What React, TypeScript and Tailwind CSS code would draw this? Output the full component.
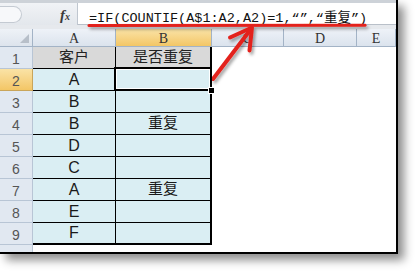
const sheet = [
  { n: 1, a: "客户", b: "是否重复" },
  { n: 2, a: "A", b: "" },
  { n: 3, a: "B", b: "" },
  { n: 4, a: "B", b: "重复" },
  { n: 5, a: "D", b: "" },
  { n: 6, a: "C", b: "" },
  { n: 7, a: "A", b: "重复" },
  { n: 8, a: "E", b: "" },
  { n: 9, a: "F", b: "" },
];

const cols = ["A", "B", "C", "D", "E"];

export default function App() {
  return (
    <div className="relative w-[419px] h-[275px] overflow-hidden bg-white font-['Liberation_Sans','Noto_Sans_CJK_SC',sans-serif]">
      <div className="w-[398px] h-[254px] flex flex-col border-r-2 border-b-2 border-black bg-white shadow-[6px_6px_9px_rgba(0,0,0,0.45)]">
        {/* formula bar */}
        <div className="h-[3px] bg-[#cdd2d8]" />
        <div className="h-[22px] flex">
          <div className="w-[78px] flex items-center bg-gradient-to-b from-[#f1f3f6] to-[#e3e7ec] border-r border-[#bfc6cf]">
            <div className="w-[22px] h-[17px] rounded-r-[9px] bg-[#f7f8fa] border border-l-0 border-[#c4cad2]" />
            <span className="ml-[38px] mt-[2px] font-['Liberation_Serif',serif] italic font-bold text-[15px] leading-none text-[#3a3a3a]">
              f<span className="text-[10px]">x</span>
            </span>
          </div>
          <div className="flex-1 bg-white border-b border-[#b9c0c9] pl-[11px] pt-[8px] font-['Liberation_Mono','Noto_Sans_CJK_SC',monospace] text-[13.5px] leading-[15px] text-[#111] whitespace-nowrap">
            =IF(COUNTIF(A$1:A2,A2)=1,“”,“重复”)
          </div>
        </div>
        <div className="h-[4px] bg-[#e6e9ed]" />

        {/* sheet */}
        <div className="flex-1 grid grid-cols-[33px_83px_96px_72px_73px_1fr] grid-rows-[18px_repeat(9,22px)_1fr]">
          <div className="relative bg-gradient-to-b from-[#eef2f7] to-[#dde4ed] border-r border-b border-[#a3b3c6]">
            <svg className="absolute right-[3px] bottom-[3px]" width="9" height="9" viewBox="0 0 9 9">
              <polygon points="9,0 9,9 0,9" fill="#b7bfc9" />
            </svg>
          </div>
          {cols.map((c) => (
            <div
              key={c}
              className={`flex items-center justify-center pt-[2px] border-r border-b border-[#a3b3c6] font-['Liberation_Serif',serif] text-[14px] leading-none text-[#333] ${
                c === "B"
                  ? "bg-gradient-to-b from-[#fae3a6] to-[#f3c665]"
                  : "bg-gradient-to-b from-[#eef2f8] to-[#dbe3ed]"
              }`}
            >
              {c}
            </div>
          ))}

          {sheet.map((r) => (
            <div key={r.n} className="contents">
              <div
                className={`flex items-center justify-center pt-[3px] border-r border-b text-[14px] leading-none text-[#555] ${
                  r.n === 2
                    ? "bg-gradient-to-b from-[#fae3a6] to-[#f3c665] border-[#c9a55a]"
                    : "bg-[#e1e8f1] border-[#b8c5d5]"
                }`}
              >
                {r.n}
              </div>
              <div
                className={`flex items-center justify-center border-r border-black ${
                  r.n === 9 ? "border-b-2" : "border-b"
                } ${
                  r.n === 1
                    ? "bg-[#d9d9d9] text-[15px] text-[#222]"
                    : "bg-[#daeef3] text-[16px] text-[#1a1a1a]"
                }`}
              >
                {r.a}
              </div>
              <div
                className={`relative flex items-center justify-center border-r-2 border-black text-[15px] text-[#1a1a1a] ${
                  r.n === 9 ? "border-b-2" : "border-b"
                } ${r.n === 1 ? "bg-[#d9d9d9] text-[#222]" : "bg-[#daeef3]"}`}
              >
                {r.b}
                {r.n === 2 && (
                  <>
                    <span className="absolute z-10 -top-[2px] -left-[2px] -right-[2px] -bottom-[1px] border-2 border-black shadow-[inset_0_0_0_1px_#fff]" />
                    <span className="absolute z-20 -right-[5px] -bottom-[4px] w-[7px] h-[7px] bg-black border border-white" />
                  </>
                )}
              </div>
              <div className="bg-white" />
              <div className="bg-white" />
              <div className="bg-white" />
            </div>
          ))}

          <div className="bg-[#e1e8f1] border-r border-[#b8c5d5]" />
          <div className="bg-white" />
          <div className="bg-white" />
          <div className="bg-white" />
          <div className="bg-white" />
          <div className="bg-white" />
        </div>
      </div>

      {/* red annotation */}
      <svg className="absolute left-0 top-0 pointer-events-none" width="419" height="275" viewBox="0 0 419 275">
        <defs>
          <filter id="sh" x="-20%" y="-20%" width="140%" height="140%">
            <feDropShadow dx="2" dy="2.5" stdDeviation="1.5" floodColor="#000" floodOpacity="0.35" />
          </filter>
        </defs>
        <g filter="url(#sh)" stroke="#e3211c" fill="none" strokeLinecap="round" strokeLinejoin="round">
          <path d="M89 25.5 L365 25.2" strokeWidth="3" />
          <path d="M213 79 L251 29" strokeWidth="4" />
          <path d="M230 37.5 L252 27.5 L249.5 50.5" strokeWidth="4" />
        </g>
      </svg>
    </div>
  );
}
